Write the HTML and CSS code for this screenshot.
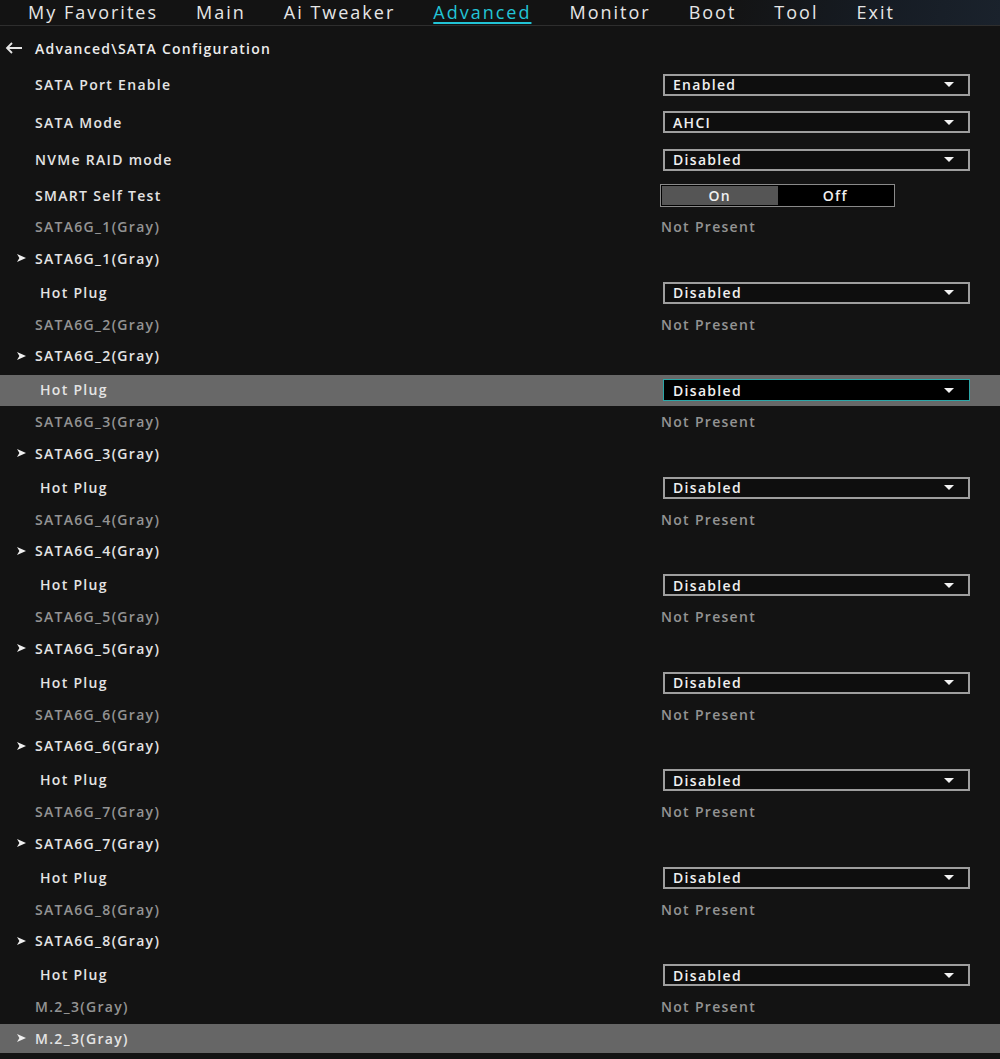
FILE: index.html
```html
<!DOCTYPE html>
<html>
<head>
<meta charset="utf-8">
<link rel="stylesheet" href="styles.css">
</head>
<body>
<div class="page">
  <nav class="nav">
    <span class="tab">My Favorites</span>
    <span class="tab">Main</span>
    <span class="tab">Ai Tweaker</span>
    <span class="tab active">Advanced</span>
    <span class="tab">Monitor</span>
    <span class="tab">Boot</span>
    <span class="tab">Tool</span>
    <span class="tab">Exit</span>
  </nav>
  <div class="crumb">
    <svg class="back" width="18" height="12" viewBox="0 0 18 12"><path d="M17 6H2M7 1L2 6l5 5" fill="none" stroke="#e6e6e6" stroke-width="1.8"/></svg>
    <span>Advanced\SATA Configuration</span>
  </div>

  <div class="list">
    <div class="row top"><span class="label">SATA Port Enable</span><div class="sel"><span>Enabled</span><i class="caret"></i></div></div>
    <div class="row top"><span class="label">SATA Mode</span><div class="sel"><span>AHCI</span><i class="caret"></i></div></div>
    <div class="row top"><span class="label">NVMe RAID mode</span><div class="sel"><span>Disabled</span><i class="caret"></i></div></div>
    <div class="row tog-row"><span class="label">SMART Self Test</span><div class="toggle"><span class="on">On</span><span class="off">Off</span></div></div>

    <div class="row np"><span class="label dim">SATA6G_1(Gray)</span><span class="val dim">Not Present</span></div>
    <div class="row sub"><svg class="arr" width="9" height="8" viewBox="0 0 9 8"><path d="M0 0L9 4L0 8L2.4 4Z" fill="#f0f0f0"/></svg><span class="label">SATA6G_1(Gray)</span></div>
    <div class="row hp"><span class="label in">Hot Plug</span><div class="sel"><span>Disabled</span><i class="caret"></i></div></div>

    <div class="row np"><span class="label dim">SATA6G_2(Gray)</span><span class="val dim">Not Present</span></div>
    <div class="row sub"><svg class="arr" width="9" height="8" viewBox="0 0 9 8"><path d="M0 0L9 4L0 8L2.4 4Z" fill="#f0f0f0"/></svg><span class="label">SATA6G_2(Gray)</span></div>
    <div class="row hp sel-row"><span class="label in">Hot Plug</span><div class="sel focus"><span>Disabled</span><i class="caret"></i></div></div>

    <div class="row np"><span class="label dim">SATA6G_3(Gray)</span><span class="val dim">Not Present</span></div>
    <div class="row sub"><svg class="arr" width="9" height="8" viewBox="0 0 9 8"><path d="M0 0L9 4L0 8L2.4 4Z" fill="#f0f0f0"/></svg><span class="label">SATA6G_3(Gray)</span></div>
    <div class="row hp"><span class="label in">Hot Plug</span><div class="sel"><span>Disabled</span><i class="caret"></i></div></div>

    <div class="row np"><span class="label dim">SATA6G_4(Gray)</span><span class="val dim">Not Present</span></div>
    <div class="row sub"><svg class="arr" width="9" height="8" viewBox="0 0 9 8"><path d="M0 0L9 4L0 8L2.4 4Z" fill="#f0f0f0"/></svg><span class="label">SATA6G_4(Gray)</span></div>
    <div class="row hp"><span class="label in">Hot Plug</span><div class="sel"><span>Disabled</span><i class="caret"></i></div></div>

    <div class="row np"><span class="label dim">SATA6G_5(Gray)</span><span class="val dim">Not Present</span></div>
    <div class="row sub"><svg class="arr" width="9" height="8" viewBox="0 0 9 8"><path d="M0 0L9 4L0 8L2.4 4Z" fill="#f0f0f0"/></svg><span class="label">SATA6G_5(Gray)</span></div>
    <div class="row hp"><span class="label in">Hot Plug</span><div class="sel"><span>Disabled</span><i class="caret"></i></div></div>

    <div class="row np"><span class="label dim">SATA6G_6(Gray)</span><span class="val dim">Not Present</span></div>
    <div class="row sub"><svg class="arr" width="9" height="8" viewBox="0 0 9 8"><path d="M0 0L9 4L0 8L2.4 4Z" fill="#f0f0f0"/></svg><span class="label">SATA6G_6(Gray)</span></div>
    <div class="row hp"><span class="label in">Hot Plug</span><div class="sel"><span>Disabled</span><i class="caret"></i></div></div>

    <div class="row np"><span class="label dim">SATA6G_7(Gray)</span><span class="val dim">Not Present</span></div>
    <div class="row sub"><svg class="arr" width="9" height="8" viewBox="0 0 9 8"><path d="M0 0L9 4L0 8L2.4 4Z" fill="#f0f0f0"/></svg><span class="label">SATA6G_7(Gray)</span></div>
    <div class="row hp"><span class="label in">Hot Plug</span><div class="sel"><span>Disabled</span><i class="caret"></i></div></div>

    <div class="row np"><span class="label dim">SATA6G_8(Gray)</span><span class="val dim">Not Present</span></div>
    <div class="row sub"><svg class="arr" width="9" height="8" viewBox="0 0 9 8"><path d="M0 0L9 4L0 8L2.4 4Z" fill="#f0f0f0"/></svg><span class="label">SATA6G_8(Gray)</span></div>
    <div class="row hp"><span class="label in">Hot Plug</span><div class="sel"><span>Disabled</span><i class="caret"></i></div></div>

    <div class="row np"><span class="label dim">M.2_3(Gray)</span><span class="val dim">Not Present</span></div>
    <div class="row sub last"><svg class="arr" width="9" height="8" viewBox="0 0 9 8"><path d="M0 0L9 4L0 8L2.4 4Z" fill="#f0f0f0"/></svg><span class="label">M.2_3(Gray)</span></div>
  </div>
</div>
</body>
</html>
```

FILE: styles.css
```css
html, body {
  margin: 0;
  padding: 0;
  background: #121212;
}
.page {
  width: 1000px;
  height: 1059px;
  overflow: hidden;
  background: #131313;
  font-family: "Open Sans", "Liberation Sans", sans-serif;
  font-weight: 600;
  color: #e4e4e4;
}
.nav {
  height: 25px;
  border-bottom: 1px solid #2e2e2e;
  display: flex;
  align-items: flex-start;
  gap: 38px;
  padding-left: 28px;
  font-size: 18px;
  font-weight: 500;
  letter-spacing: 2px;
  line-height: 24px;
  background: linear-gradient(100deg, #131313 0%, #131313 72%, #161c24 88%, #1a222c 100%);
}
.tab { color: #e6e6e6; white-space: nowrap; }
.tab.active {
  color: #22c4d6;
  text-decoration: underline;
  text-decoration-thickness: 2px;
  text-underline-offset: 3px;
}
.crumb {
  height: 36px;
  padding-top: 4px;
  display: flex;
  align-items: center;
  gap: 12px;
  padding-left: 5px;
  font-size: 14px;
  letter-spacing: 1.25px;
  color: #ececec;
}
.back { display: block; }
.list { display: flex; flex-direction: column; }
.row {
  display: flex;
  align-items: center;
  padding-left: 35px;
  font-size: 14px;
  letter-spacing: 1.3px;
}
.label { width: 625px; white-space: nowrap; }
.label.in { box-sizing: border-box; padding-left: 5px; }
.dim { color: #939393; }
.row.top { height: 37.5px; }
.row.tog-row { height: 30.5px; padding-top: 2px; }
.row.np { height: 31.5px; }
.row.np .val { margin-left: 1px; }
.row.sub { height: 31.5px; padding-left: 17px; }
.row.sub .arr { margin-right: 9px; }
.row.hp { height: 32.5px; margin-top: 2px; }
.row.sel-row { background: linear-gradient(transparent 1.5px, #686868 1.5px); }
.row.last { background: #666666; height: 29px; margin-top: 1px; }

.sel {
  box-sizing: border-box;
  width: 307px;
  height: 22px;
  margin-left: 3px;
  border: 2px solid #9e9e9e;
  background: #0e0e0e;
  display: flex;
  align-items: center;
  justify-content: space-between;
  padding: 0 14px 0 8px;
  color: #f0f0f0;
  letter-spacing: 1.3px;
}
.row.hp .sel { margin-top: 1px; }
.sel.focus {
  background: #000;
  border: 1px solid #2aa7a8;
  padding-left: 9px;
  padding-right: 15px;
}
.caret {
  width: 0;
  height: 0;
  border-left: 5px solid transparent;
  border-right: 5px solid transparent;
  border-top: 5px solid #f2f2f2;
}
.toggle {
  box-sizing: border-box;
  width: 235px;
  height: 23px;
  border: 1px solid #8a8a8a;
  background: #000;
  display: flex;
  padding: 1px;
  font-size: 14px;
}
.toggle span {
  flex: 1;
  display: flex;
  align-items: center;
  justify-content: center;
  color: #f0f0f0;
}
.toggle .on { background: #555555; }
.toggle .off { background: #000; }
```
